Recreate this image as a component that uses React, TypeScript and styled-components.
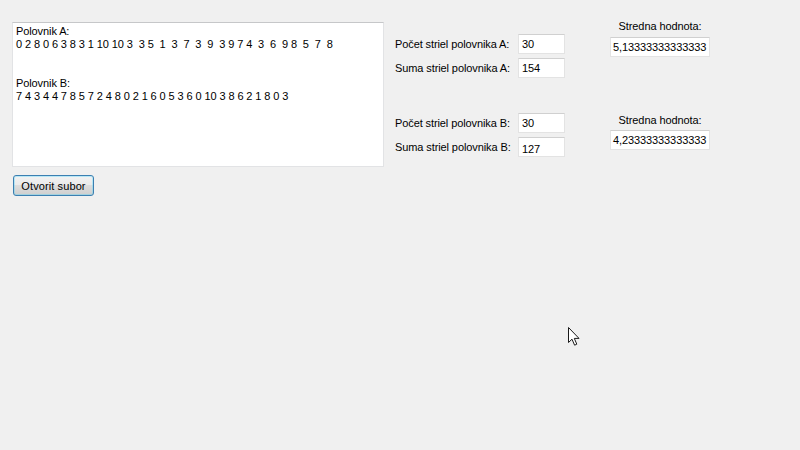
import React from 'react';
import styled, { createGlobalStyle } from 'styled-components';

const lineA = '0 2 8 0 6 3 8 3 1 10 10 3  3 5  1  3  7  3  9  3 9 7 4  3  6  9 8  5  7  8';
const lineB = '7 4 3 4 4 7 8 5 7 2 4 8 0 2 1 6 0 5 3 6 0 10 3 8 6 2 1 8 0 3';

const groups = [
  { key: 'A', pocet: '30', suma: '154', mean: '5,13333333333333', top: 0, statTop: 0, statGap: 4 },
  { key: 'B', pocet: '30', suma: '127', mean: '4,23333333333333', top: 21, statTop: 15, statGap: 3 },
];

const App: React.FC = () => {
  return (
    <>
      <GlobalStyle />
      <Root>
        <LeftColumn>
          <Output>
            {`Polovnik A:\n${lineA}\n\n\nPolovnik B:\n${lineB}`}
          </Output>
          <OpenButton>Otvorit subor</OpenButton>
        </LeftColumn>

        <RightPanel>
          {groups.map((g) => (
            <Group key={g.key} $top={g.top}>
              <FieldGrid>
                <FieldLabel>Počet striel polovnika {g.key}:</FieldLabel>
                <TextBox>{g.pocet}</TextBox>
                <FieldLabel>Suma striel polovnika {g.key}:</FieldLabel>
                <TextBox $low={g.key === 'B'}>{g.suma}</TextBox>
              </FieldGrid>
              <Stat $top={g.statTop} $gap={g.statGap}>
                <StatLabel>Stredna hodnota:</StatLabel>
                <MeanBox>{g.mean}</MeanBox>
              </Stat>
            </Group>
          ))}
        </RightPanel>

        <Cursor width="12" height="20" viewBox="0 0 12 20">
          <path
            d="M0.5 0.5 L0.5 15.5 L4 12.2 L6.6 18.2 L8.8 17.2 L6.3 11.4 L11 11.4 Z"
            fill="#ffffff"
            stroke="#1a1a1a"
            strokeWidth="1"
            strokeLinejoin="miter"
          />
        </Cursor>
      </Root>
    </>
  );
};

const GlobalStyle = createGlobalStyle`
  html, body {
    margin: 0;
    padding: 0;
    background: #f0f0f0;
  }
  body {
    font-family: "Liberation Sans", Arial, sans-serif;
    font-size: 11px;
    letter-spacing: -0.1px;
    color: #000;
  }
`;

const Root = styled.div`
  position: relative;
  width: 800px;
  height: 450px;
  box-sizing: border-box;
  display: flex;
  flex-direction: row;
  align-items: flex-start;
  padding: 20px 0 0 12px;
  overflow: hidden;
`;

// left side

const LeftColumn = styled.div`
  display: flex;
  flex-direction: column;
  align-items: flex-start;
  padding-top: 2px;
  gap: 8px;
`;

const Output = styled.div`
  width: 372px;
  height: 145px;
  box-sizing: border-box;
  background: #ffffff;
  border: 1px solid #e2e3e5;
  border-top-color: #c6c7c9;
  padding: 2px 3px;
  line-height: 13px;
  white-space: pre;
  overflow: hidden;
`;

const OpenButton = styled.div`
  margin-left: 1px;
  width: 81px;
  height: 21px;
  box-sizing: border-box;
  display: flex;
  align-items: center;
  justify-content: center;
  letter-spacing: 0.1px;
  border: 1px solid #3c7fb1;
  border-radius: 3px;
  box-shadow: inset 0 0 0 1px #48d4ff55;
  background: linear-gradient(#f2f2f2 0%, #ebebeb 45%, #dddddd 50%, #cfcfcf 100%);
  cursor: default;
`;

// right side

const RightPanel = styled.div`
  display: flex;
  flex-direction: column;
  margin-left: 11px;
`;

const Group = styled.div<{ $top: number }>`
  display: flex;
  flex-direction: row;
  align-items: flex-start;
  margin-top: ${(p) => p.$top}px;
`;

const FieldGrid = styled.div`
  display: grid;
  grid-template-columns: 113px 47px;
  column-gap: 10px;
  row-gap: 4px;
  align-items: center;
  margin-top: 14px;
`;

const FieldLabel = styled.span`
  text-align: right;
  white-space: nowrap;
  line-height: 13px;
`;

const TextBox = styled.div<{ $low?: boolean }>`
  height: 20px;
  box-sizing: border-box;
  background: #ffffff;
  border: 1px solid #e3e3e3;
  border-top-color: #d0d0d0;
  padding: ${(p) => (p.$low ? '5px 3px 0' : '3px 3px 0')};
  line-height: 13px;
`;

const Stat = styled.div<{ $top: number; $gap: number }>`
  display: flex;
  flex-direction: column;
  align-items: center;
  margin-left: 45px;
  margin-top: ${(p) => p.$top}px;
  gap: ${(p) => p.$gap}px;
`;

const StatLabel = styled.span`
  line-height: 13px;
  white-space: nowrap;
`;

const MeanBox = styled(TextBox)`
  width: 100px;
  padding: 3px 2px 0;
  white-space: nowrap;
  overflow: hidden;
`;

const Cursor = styled.svg`
  position: absolute;
  left: 568px;
  top: 327px;
`;

export default App;
